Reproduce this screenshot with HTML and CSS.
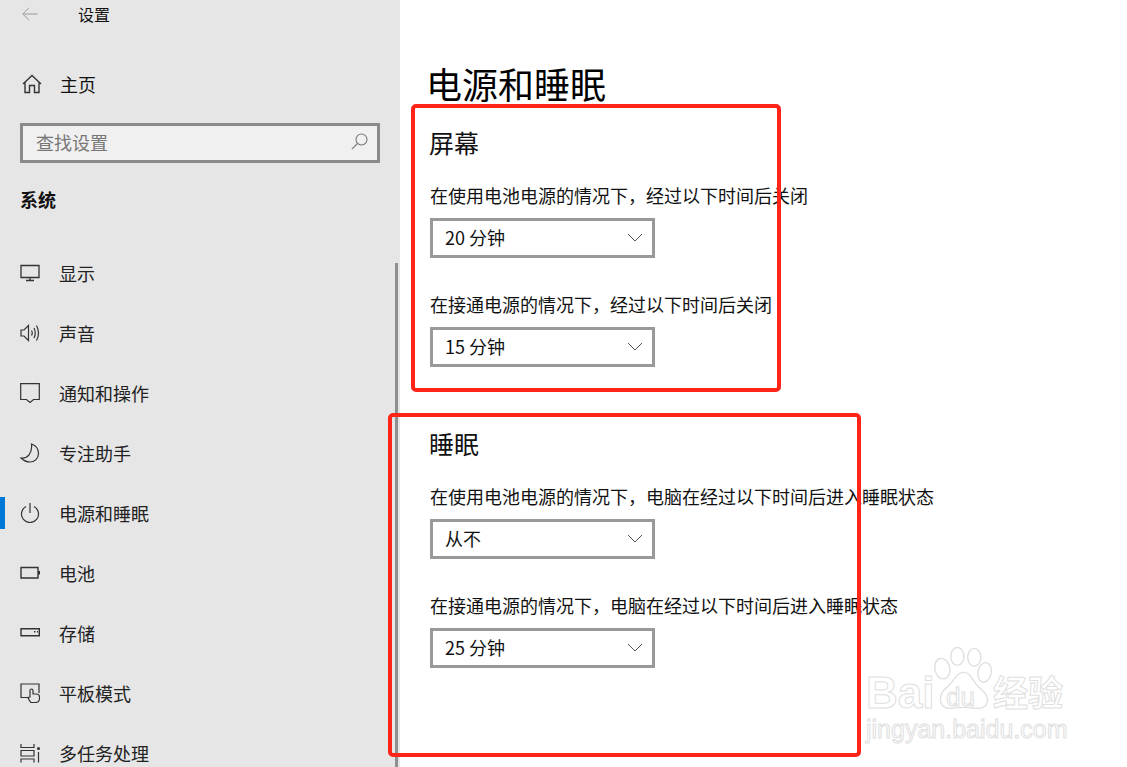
FILE: index.html
```html
<!DOCTYPE html>
<html lang="zh-CN">
<head>
    <meta charset="UTF-8">
    <meta name="viewport" content="width=device-width, initial-scale=1.0">
    <title>设置</title>
    <link rel="stylesheet" href="styles.css">
</head>
<body>

    <div class="window">
        <aside class="sidebar">
            <div class="titlebar">
                <svg class="back" width="16" height="14" viewBox="0 0 16 14"><path d="M15.5 7H1M7 .8 .8 7 7 13.2" fill="none" stroke="#9a9a9a" stroke-width="1"/></svg>
                <span>设置</span>
            </div>

            <a class="home">
                <svg class="icon" width="20" height="20" viewBox="0 0 20 20"><path d="M1 10 10 1.5 19 10M3 8.5V18.5H7.5V11.5H12.5V18.5H17V8.5" fill="none" stroke="#333" stroke-width="1.4"/></svg>
                <span>主页</span>
            </a>

            <div class="search">
                <span>查找设置</span>
                <svg width="17" height="17" viewBox="0 0 17 17"><circle cx="10.5" cy="6.5" r="5.5" fill="none" stroke="#777" stroke-width="1.1"/><path d="M6.5 10.5 .8 16.2" stroke="#777" stroke-width="1.1"/></svg>
            </div>

            <h3 class="group">系统</h3>

            <nav class="nav">
                <a class="nav-item">
                    <svg class="icon" width="20" height="20" viewBox="0 0 20 20"><path d="M1 2.5H19V14.5H1ZM10 14.5V17.5M6 17.5H14" fill="none" stroke="#333" stroke-width="1.3"/></svg>
                    <span>显示</span>
                </a>
                <a class="nav-item">
                    <svg class="icon" width="20" height="20" viewBox="0 0 20 20"><path d="M1 7H4L8.5 2.5V17.5L4 13H1ZM11.5 7.5Q13 10 11.5 12.5M14 5Q16.5 10 14 15M16.5 2.5Q20.5 10 16.5 17.5" fill="none" stroke="#333" stroke-width="1.2"/></svg>
                    <span>声音</span>
                </a>
                <a class="nav-item">
                    <svg class="icon" width="20" height="20" viewBox="0 0 20 20"><path d="M.7 .7H19.3V16.5H13.5L10 19.5 6.5 16.5H.7Z" fill="none" stroke="#333" stroke-width="1.2"/></svg>
                    <span>通知和操作</span>
                </a>
                <a class="nav-item">
                    <svg class="icon" width="20" height="20" viewBox="0 0 20 20"><path d="M11.5 1C16 2.500 18.500 6 18.500 10.500 18.500 15.500 14.500 19 10 19 6.500 19 3.500 17.500 1 15 7.500 16 12.500 10.500 11.500 1Z" fill="none" stroke="#333" stroke-width="1.2"/></svg>
                    <span>专注助手</span>
                </a>
                <a class="nav-item active">
                    <svg class="icon" width="20" height="20" viewBox="0 0 20 20"><path d="M6 3.500A8.500 8.500 0 1 0 14 3.500M10 0V10" fill="none" stroke="#333" stroke-width="1.2"/></svg>
                    <span>电源和睡眠</span>
                </a>
                <a class="nav-item">
                    <svg class="icon" width="20" height="20" viewBox="0 0 20 20"><path d="M1 4.500H18V15H1Z" fill="none" stroke="#333" stroke-width="1.4"/><path d="M18 8H20V11.500H18Z" fill="#333"/></svg>
                    <span>电池</span>
                </a>
                <a class="nav-item">
                    <svg class="icon" width="20" height="20" viewBox="0 0 20 20"><path d="M1 5.700H19.300V12.700H1Z" fill="none" stroke="#333" stroke-width="1.4"/><path d="M14 8H15.500V9.500H14ZM17 8H18V9.500H17Z" fill="#333"/></svg>
                    <span>存储</span>
                </a>
                <a class="nav-item">
                    <svg class="icon" width="20" height="20" viewBox="0 0 20 20"><path d="M8 14.500H1V1H19V10" fill="none" stroke="#333" stroke-width="1.2"/><path d="M11 19.500C9.500 18 8.500 16.500 8 14.500L10 14V7.500Q10 6 11.500 6 13 6 13 7.500V11H16.500Q19.500 11 19.500 14V15.500Q19.500 19.500 15.500 19.500Z" fill="#e6e6e6" stroke="#333" stroke-width="1.2"/></svg>
                    <span>平板模式</span>
                </a>
                <a class="nav-item">
                    <svg class="icon" width="20" height="20" viewBox="0 0 20 20"><path d="M1 1V4.500H14V1M1 19.500V16H14V19.500M1 7.500H14V13H1ZM18.500 9V19.500" fill="none" stroke="#333" stroke-width="1.2"/><circle cx="18.500" cy="5.500" r="1.500" fill="#333"/></svg>
                    <span>多任务处理</span>
                </a>
            </nav>

            <div class="scrollbar"></div>
        </aside>

        <main class="content">
            <h1>电源和睡眠</h1>

            <section class="screen">
                <h2>屏幕</h2>
                <p class="first">在使用电池电源的情况下，经过以下时间后关闭</p>
                <div class="select"><span>20 分钟</span><svg class="chevron" width="16" height="9" viewBox="0 0 16 9"><path d="M1 1 8 8 15 1" fill="none" stroke="#555" stroke-width="1"/></svg></div>
                <p>在接通电源的情况下，经过以下时间后关闭</p>
                <div class="select"><span>15 分钟</span><svg class="chevron" width="16" height="9" viewBox="0 0 16 9"><path d="M1 1 8 8 15 1" fill="none" stroke="#555" stroke-width="1"/></svg></div>
            </section>

            <section class="sleep">
                <h2>睡眠</h2>
                <p class="first">在使用电池电源的情况下，电脑在经过以下时间后进入睡眠状态</p>
                <div class="select"><span>从不</span><svg class="chevron" width="16" height="9" viewBox="0 0 16 9"><path d="M1 1 8 8 15 1" fill="none" stroke="#555" stroke-width="1"/></svg></div>
                <p>在接通电源的情况下，电脑在经过以下时间后进入睡眠状态</p>
                <div class="select"><span>25 分钟</span><svg class="chevron" width="16" height="9" viewBox="0 0 16 9"><path d="M1 1 8 8 15 1" fill="none" stroke="#555" stroke-width="1"/></svg></div>
            </section>
        </main>

        <!-- red marks drawn over the screenshot -->
        <div class="mark mark-screen"></div>
        <div class="mark mark-sleep"></div>

        <div class="watermark">
            <svg class="paw" width="60" height="64" viewBox="0 0 62 68">
                <g fill="#fff" stroke="#e0e0e0" stroke-width="1.500">
                    <ellipse cx="9" cy="23" rx="8" ry="11" transform="rotate(-12 9 23)"/>
                    <ellipse cx="25" cy="10" rx="7" ry="9.500"/>
                    <ellipse cx="43" cy="11" rx="7" ry="9.500"/>
                    <ellipse cx="54" cy="27" rx="7" ry="10.500" transform="rotate(12 54 27)"/>
                    <path d="M32 27C24 27 22 35 16 41 10 46 6 50 7 57 8 64 14 66 20 65 27 64 36 64 43 65 50 66 57 64 57 56 57 49 51 46 46 41 41 35 39 27 32 27Z"/>
                </g>
            </svg>
            <span class="wm-bai">Bai</span>
            <span class="wm-du">du</span>
            <span class="wm-cn">经验</span>
            <span class="wm-url">jingyan.baidu.com</span>
        </div>
    </div>

</body>
</html>
```

FILE: styles.css
```css
body {
    margin: 0;
    font-family: "Noto Sans CJK SC", "Noto Sans", sans-serif;
    background-color: white;
    color: #111;
}

.window {
    position: relative;
    display: flex;
    width: 1127px;
    height: 767px;
    overflow: hidden;
}

/* left column */
.sidebar {
    position: relative;
    flex: 0 0 400px;
    height: 767px;
    padding: 0 20px;
    box-sizing: border-box;
    background-color: #e6e6e6;
    overflow: hidden;
}

.titlebar {
    display: flex;
    align-items: center;
    height: 27px;
    font-size: 16px;
}

.titlebar .back {
    margin-left: 2px;
    margin-right: 40px;
}

.home {
    display: flex;
    align-items: center;
    height: 30px;
    margin-top: 42px;
    font-size: 18px;
}

.home .icon {
    margin-left: 2px;
    margin-right: 18px;
}

.search {
    display: flex;
    align-items: center;
    justify-content: space-between;
    height: 40px;
    margin-top: 24px;
    padding: 0 9px 3px 13px;
    box-sizing: border-box;
    border: 3px solid #8a8a8a;
    background-color: #f0f0f0;
    font-size: 18px;
    color: #777;
}

.group {
    margin: 22px 0 0;
    font-size: 18px;
    line-height: 28px;
    font-weight: 700;
}

.nav {
    margin-top: 30px;
}

.nav-item {
    position: relative;
    display: flex;
    align-items: center;
    gap: 19px;
    height: 60px;
    font-size: 18px;
    color: #222;
}

.active::before {
    content: "";
    position: absolute;
    left: -20px;
    top: 14px;
    width: 5px;
    height: 32px;
    background-color: #0078d7;
}

.scrollbar {
    position: absolute;
    top: 263px;
    right: 2px;
    bottom: 0;
    width: 3px;
    background-color: #8f8f8f;
}

/* right column */
.content {
    flex: 1;
    padding: 59px 0 0 30px;
}

h1 {
    margin: 0 0 0 -4px;
    font-size: 36px;
    line-height: 48px;
    font-weight: 400;
    color: #000;
}

h2 {
    margin: 0 0 0 -1px;
    font-size: 25px;
    line-height: 34px;
    font-weight: 400;
}

.screen {
    margin-top: 18px;
}

.sleep {
    margin-top: 59px;
}

p {
    margin: 34px 0 11px;
    font-size: 18px;
    line-height: 24px;
}

p.first {
    margin-top: 24px;
}

.select {
    display: flex;
    align-items: center;
    justify-content: space-between;
    width: 225px;
    height: 40px;
    padding: 0 9px 2px 12px;
    box-sizing: border-box;
    border: 3px solid #999;
    font-size: 18px;
}

/* annotations */
.mark {
    position: absolute;
    box-sizing: border-box;
    border: 4px solid #ff2318;
    border-radius: 5px;
}

.mark-screen {
    left: 411px;
    top: 104px;
    width: 370px;
    height: 288px;
}

.mark-sleep {
    left: 388px;
    top: 413px;
    width: 473px;
    height: 344px;
}

.watermark {
    position: absolute;
    left: 866px;
    top: 645px;
    width: 204px;
    height: 100px;
    color: white;
    -webkit-text-stroke: 1px #e0e0e0;
}

.watermark span {
    position: absolute;
    font-family: "Liberation Sans", sans-serif;
    font-weight: 700;
    white-space: nowrap;
}

.paw {
    position: absolute;
    left: 67px;
    top: 2px;
}

.watermark .wm-bai {
    left: 0;
    top: 25px;
    font-size: 44px;
    line-height: 46px;
}

.watermark .wm-du {
    left: 80px;
    top: 37px;
    font-size: 26px;
    line-height: 30px;
    font-weight: 400;
}

.watermark .wm-cn {
    left: 127px;
    top: 26px;
    font-family: "Noto Sans CJK SC", sans-serif;
    font-size: 35px;
    line-height: 40px;
}

.watermark .wm-url {
    left: 0;
    top: 68px;
    font-size: 25px;
    line-height: 32px;
    font-weight: 400;
}
```
